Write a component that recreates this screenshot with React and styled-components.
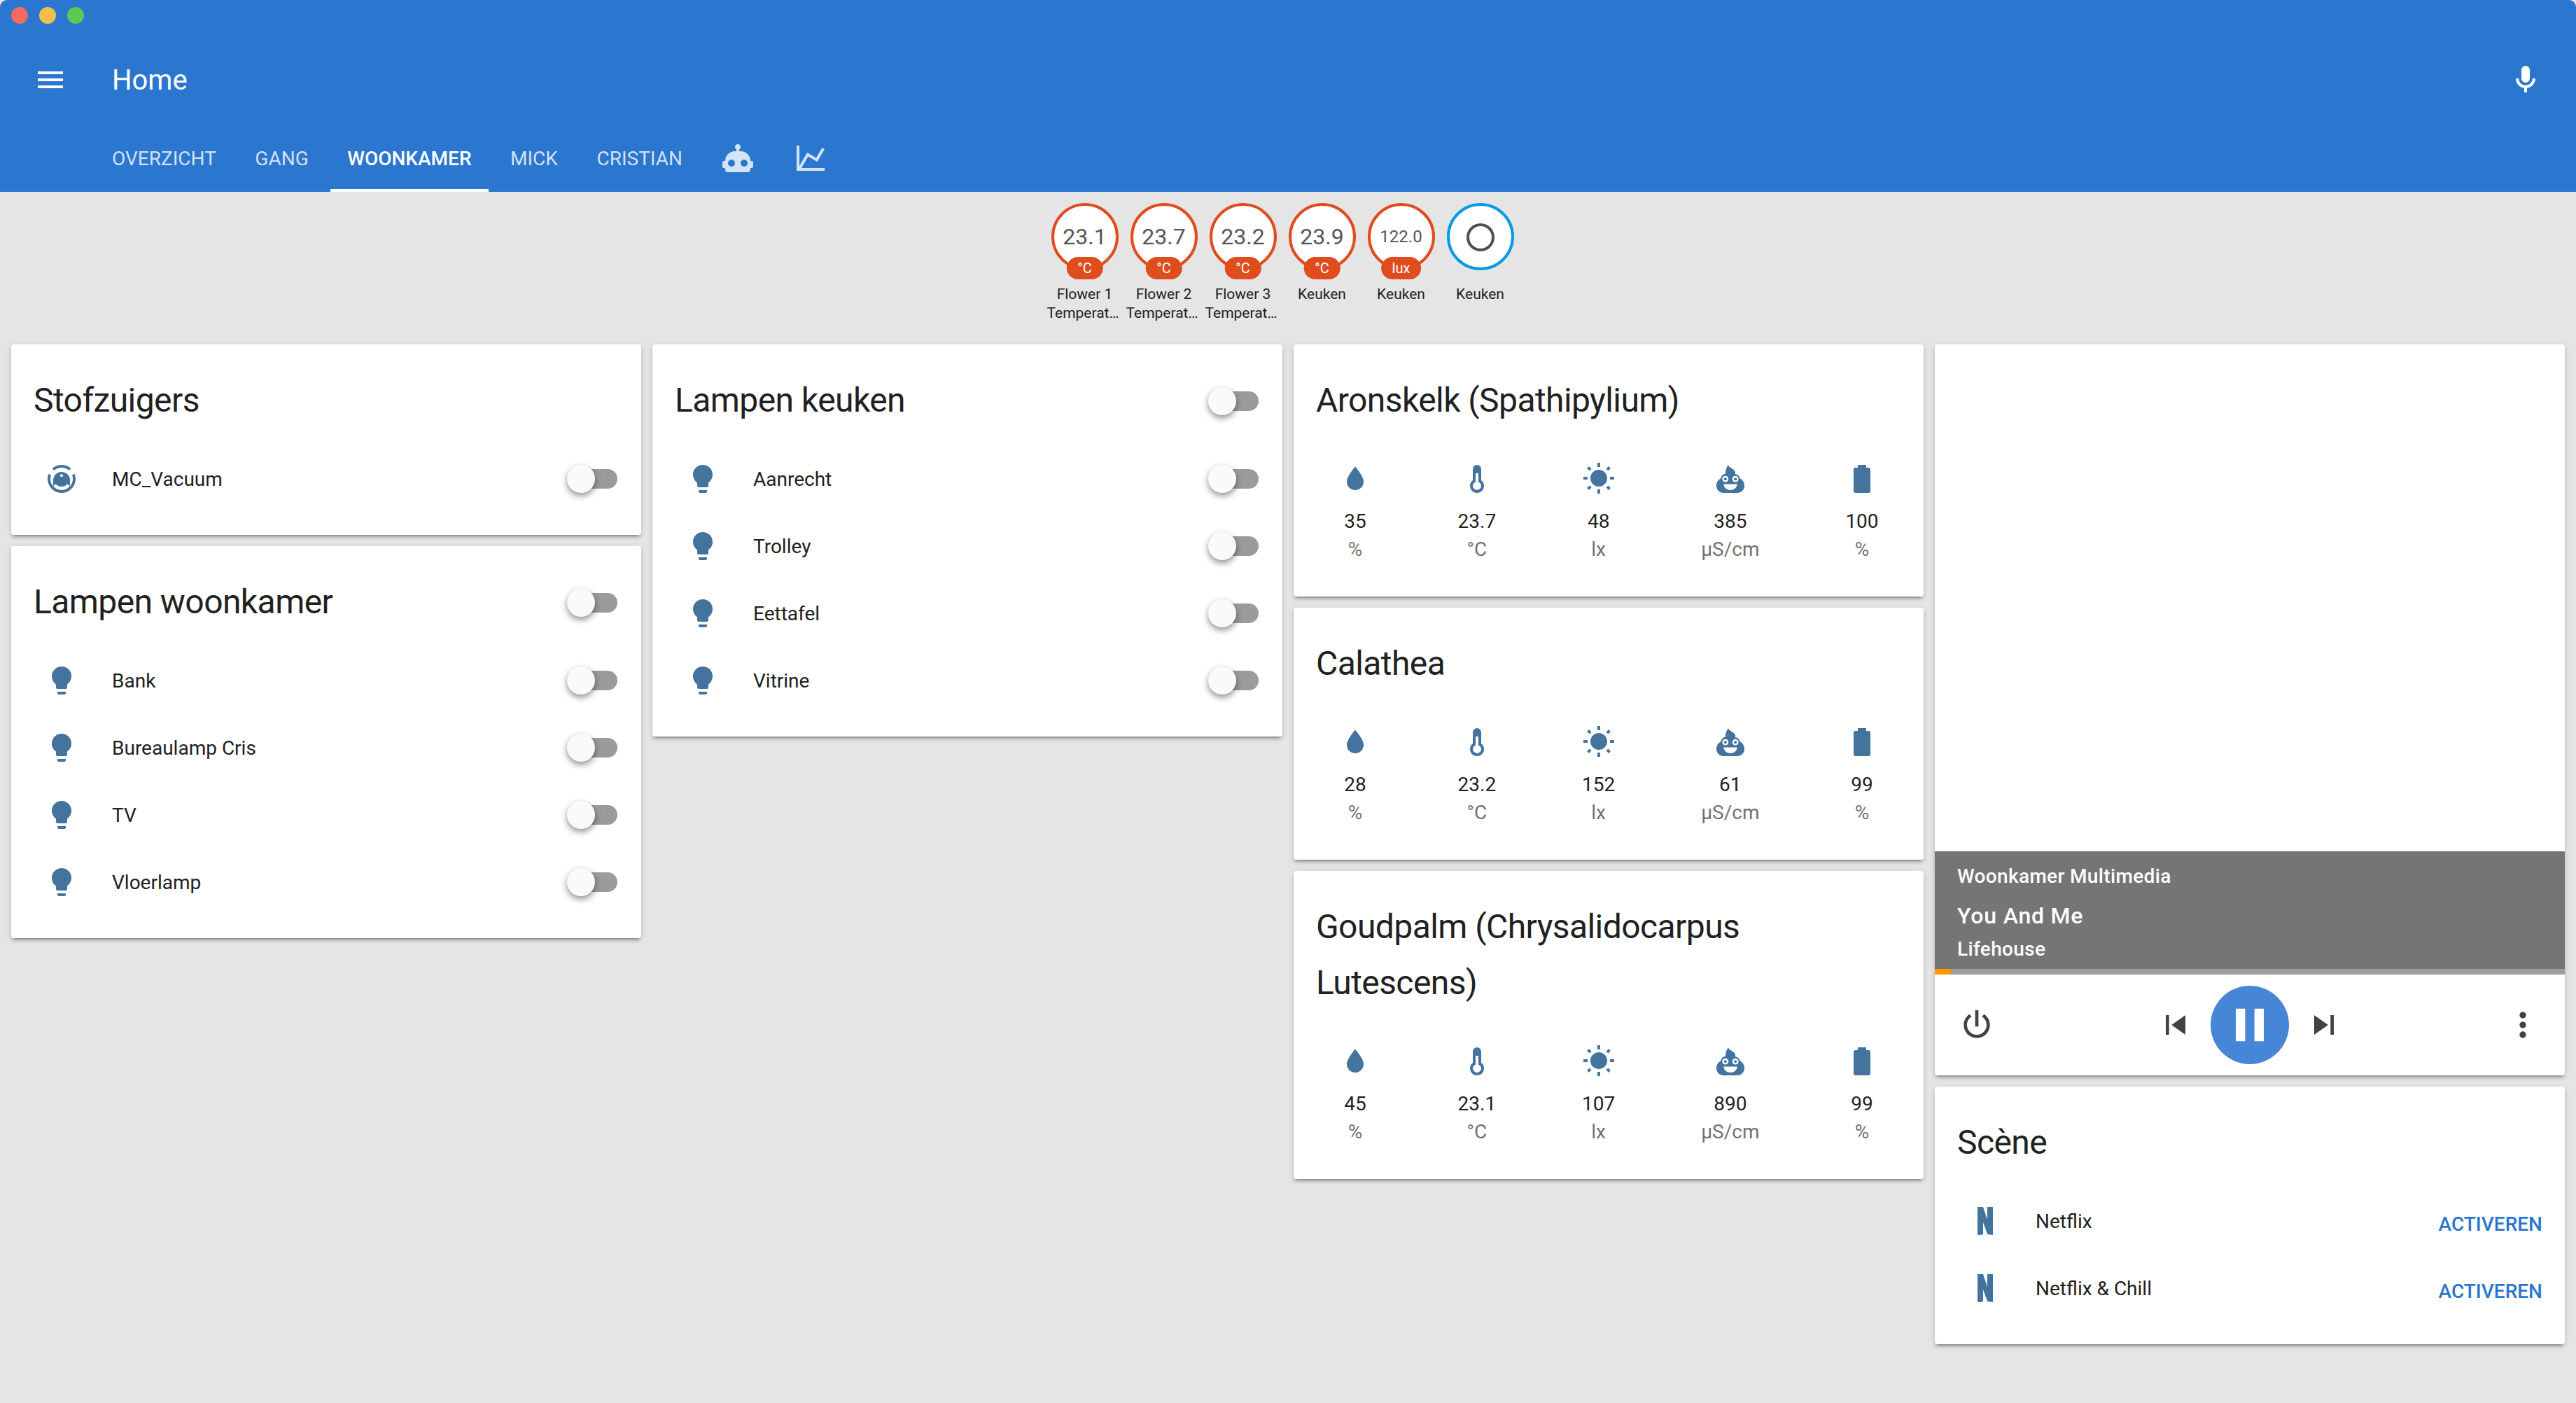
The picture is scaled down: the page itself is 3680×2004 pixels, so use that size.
import React from "react";
import styled, { createGlobalStyle } from "styled-components";

const P = {
  menu: "M3,6H21V8H3V6M3,11H21V13H3V11M3,16H21V18H3V16Z",
  mic: "M12,2A3,3 0 0,1 15,5V11A3,3 0 0,1 12,14A3,3 0 0,1 9,11V5A3,3 0 0,1 12,2M19,11C19,14.53 16.39,17.44 13,17.93V21H11V17.93C7.61,17.44 5,14.53 5,11H7A5,5 0 0,0 12,16A5,5 0 0,0 17,11H19Z",
  robot: "M12,2A2,2 0 0,1 14,4C14,4.74 13.6,5.39 13,5.73V7H14A7,7 0 0,1 21,14H22A1,1 0 0,1 23,15V18A1,1 0 0,1 22,19H21V20A2,2 0 0,1 19,22H5A2,2 0 0,1 3,20V19H2A1,1 0 0,1 1,18V15A1,1 0 0,1 2,14H3A7,7 0 0,1 10,7H11V5.73C10.4,5.39 10,4.74 10,4A2,2 0 0,1 12,2M7.5,13A2.5,2.5 0 0,0 5,15.5A2.5,2.5 0 0,0 7.5,18A2.5,2.5 0 0,0 10,15.5A2.5,2.5 0 0,0 7.5,13M16.5,13A2.5,2.5 0 0,0 14,15.5A2.5,2.5 0 0,0 16.5,18A2.5,2.5 0 0,0 19,15.5A2.5,2.5 0 0,0 16.5,13Z",
  chart: "M16,11.78L20.24,4.45L21.97,5.45L16.74,14.5L10.23,10.75L5.46,19H22V21H2V3H4V17.54L9.5,8L16,11.78Z",
  ring: "M12,2A10,10 0 0,0 2,12A10,10 0 0,0 12,22A10,10 0 0,0 22,12A10,10 0 0,0 12,2M12,4A8,8 0 0,1 20,12A8,8 0 0,1 12,20A8,8 0 0,1 4,12A8,8 0 0,1 12,4Z",
  bulb: "M12,2A7,7 0 0,0 5,9C5,11.38 6.19,13.47 8,14.74V17A1,1 0 0,0 9,18H15A1,1 0 0,0 16,17V14.74C17.81,13.47 19,11.38 19,9A7,7 0 0,0 12,2M9,21A1,1 0 0,0 10,22H14A1,1 0 0,0 15,21V20H9V21Z",
  water: "M12,20A6,6 0 0,1 6,14C6,10 12,3.25 12,3.25C12,3.25 18,10 18,14A6,6 0 0,1 12,20Z",
  thermo: "M15 13V5A3 3 0 0 0 9 5V13A5 5 0 1 0 15 13ZM11 8H13V14.2A3 3 0 1 1 11 14.2Z",
  sun: "M3.55,18.54L4.96,19.95L6.76,18.16L5.34,16.74M11,22.45C11.32,22.45 13,22.45 13,22.45V19.5H11M12,5.5A6,6 0 0,0 6,11.5A6,6 0 0,0 12,17.5A6,6 0 0,0 18,11.5C18,8.18 15.31,5.5 12,5.5M20,12.5H23V10.5H20M17.24,18.16L19.04,19.95L20.45,18.54L18.66,16.74M20.45,4.46L19.04,3.05L17.24,4.84L18.66,6.26M13,0.55H11V3.5H13M4,10.5H1V12.5H4M6.76,4.84L4.96,3.05L3.55,4.46L5.34,6.26L6.76,4.84Z",
  battery: "M16.67,4H15V2H9V4H7.33A1.33,1.33 0 0,0 6,5.33V20.67C6,21.4 6.6,22 7.33,22H16.67A1.33,1.33 0 0,0 18,20.67V5.33C18,4.6 17.4,4 16.67,4Z",
  netflix: "M6.5,2H10.5L13.44,10.83L13.5,2H17.5V22C16.25,21.78 15,21.64 13.63,21.5L10.5,13L10.5,21.59C9.18,21.71 7.83,21.86 6.5,22V2Z",
  power: "M16.56,5.44L15.11,6.89C16.84,7.94 18,9.83 18,12A6,6 0 0,1 12,18A6,6 0 0,1 6,12C6,9.83 7.16,7.94 8.88,6.88L7.44,5.44C5.36,6.88 4,9.28 4,12A8,8 0 0,0 12,20A8,8 0 0,0 20,12C20,9.28 18.64,6.88 16.56,5.44M13,3H11V13H13",
  prev: "M6,18V6H8V18H6M9.5,12L18,6V18L9.5,12Z",
  next: "M16,18H18V6H16M6,18L14.5,12L6,6V18Z",
  pause: "M14,19H18V5H14M6,19H10V5H6V19Z",
  dots: "M12,16A2,2 0 0,1 14,18A2,2 0 0,1 12,20A2,2 0 0,1 10,18A2,2 0 0,1 12,16M12,10A2,2 0 0,1 14,12A2,2 0 0,1 12,14A2,2 0 0,1 10,12A2,2 0 0,1 12,10M12,4A2,2 0 0,1 14,6A2,2 0 0,1 12,8A2,2 0 0,1 10,6A2,2 0 0,1 12,4Z",
};

const GlobalStyle = createGlobalStyle`
  html, body { margin: 0; padding: 0; background: #e5e5e5; }
  body { font-family: Roboto, "Liberation Sans", sans-serif; color: #212121; }
`;

const Page = styled.div`
  min-height: 2004px;
  background: #e5e5e5;
  display: flex;
  flex-direction: column;
`;

const Header = styled.header`
  background: #2b76ce;
  color: #fff;
  border-radius: 10px 10px 0 0;
`;

const TitleBar = styled.div`
  height: 50px;
  box-sizing: border-box;
  padding: 10px 0 0 16px;
  display: flex;
  gap: 16px;
`;

const Light = styled.span`
  width: 24px;
  height: 24px;
  border-radius: 50%;
  background: ${(p) => p.$color};
`;

const Toolbar = styled.div`
  height: 128px;
  box-sizing: border-box;
  padding: 0 48px;
  display: flex;
  align-items: center;
`;

const Title = styled.div`
  margin-left: 64px;
  padding-top: 2px;
  flex: 1;
  font-size: 40px;
  line-height: 48px;
`;

const Svg = styled.svg`
  display: block;
  flex: none;
  width: ${(p) => p.$size || 48}px;
  height: ${(p) => p.$size || 48}px;
  fill: ${(p) => p.$color || "currentColor"};
`;

const Icon = ({ d, size, color }) => (
  <Svg viewBox="0 0 24 24" $size={size} $color={color}>
    <path d={d} fillRule="evenodd" />
  </Svg>
);

const TabBar = styled.nav`
  height: 96px;
  padding-left: 136px;
  display: flex;
  gap: 7.5px;
`;

const Tab = styled.div`
  padding: 0 24px;
  display: flex;
  align-items: center;
  font-size: 28px;
  font-weight: ${(p) => (p.$active ? 500 : 400)};
  color: ${(p) => (p.$active ? "#fff" : "rgba(255,255,255,.8)")};
  box-shadow: ${(p) => (p.$active ? "inset 0 -4px 0 #fff" : "none")};
`;

const Badges = styled.div`
  display: flex;
  justify-content: center;
  padding: 16px 16px 31px 0;
`;

const Badge = styled.div`
  width: 113px;
  display: flex;
  flex-direction: column;
  align-items: center;
`;

const Circle = styled.div`
  position: relative;
  width: 96px;
  height: 96px;
  box-sizing: border-box;
  border-radius: 50%;
  border: 4.8px solid ${(p) => p.$color};
  background: #fff;
  display: flex;
  align-items: center;
  justify-content: center;
  color: #555;
  font-weight: 400;
  font-size: ${(p) => (p.$small ? 24 : 32)}px;
`;

const CircleGlyph = styled.span`
  display: block;
  margin-top: 2px;
`;

const Chip = styled.span`
  position: absolute;
  bottom: -17px;
  left: 50%;
  transform: translateX(-50%);
  height: 32px;
  line-height: 32px;
  padding: 0 16px;
  border-radius: 16px;
  background: #df4c1e;
  color: #fff;
  font-size: 20px;
  font-weight: 400;
  white-space: nowrap;
`;

const BadgeLabel = styled.div`
  margin-top: 21px;
  width: 108px;
  text-align: center;
  font-size: 21px;
  line-height: 27px;
  color: #222;
`;

const BadgeLine = styled.div`
  white-space: nowrap;
  overflow: hidden;
  text-overflow: ellipsis;
`;

const Grid = styled.main`
  display: grid;
  grid-template-columns: repeat(4, 900px);
  gap: 16px;
  padding: 0 16px;
`;

const Column = styled.div`
  display: flex;
  flex-direction: column;
  gap: 16px;
`;

const Card = styled.section`
  background: #fff;
  border-radius: 4px;
  box-shadow: 0 4px 4px rgba(0, 0, 0, .14), 0 2px 10px rgba(0, 0, 0, .12), 0 6px 2px -4px rgba(0, 0, 0, .2);
`;

const CardHead = styled.div`
  padding: 40px 34px 0 32px;
  display: flex;
  align-items: center;
  justify-content: space-between;
`;

const CardTitle = styled.h2`
  margin: 0;
  font-size: 48px;
  font-weight: 400;
  letter-spacing: -0.012em;
  line-height: 80px;
  color: #212121;
`;

const Rows = styled.div`
  padding: 24px 0 32px;
`;

const Row = styled.div`
  height: 96px;
  padding: 0 34px 0 48px;
  display: flex;
  align-items: center;
`;

const RowName = styled.div`
  flex: 1;
  margin-left: 48px;
  font-size: 28px;
  color: #212121;
`;

const Toggle = styled.div`
  position: relative;
  width: 72px;
  height: 40px;
  margin-top: ${(p) => (p.$head ? 2 : 0)}px;
`;

const Track = styled.span`
  position: absolute;
  top: 6px;
  left: 4px;
  right: 0;
  height: 28px;
  border-radius: 14px;
  background: #9b9b9b;
`;

const Thumb = styled.span`
  position: absolute;
  top: 0;
  left: 0;
  width: 40px;
  height: 40px;
  border-radius: 50%;
  background: #fafafa;
  box-shadow: 0 4px 10px rgba(0, 0, 0, .45);
`;

const Activate = styled.div`
  margin: 8px -2px 0 0;
  font-size: 28px;
  font-weight: 500;
  color: #2b76ce;
`;

const Attrs = styled.div`
  padding: 48px 64px 47px;
  display: flex;
  justify-content: space-between;
`;

const Attr = styled.div`
  display: flex;
  flex-direction: column;
  align-items: center;
`;

const AttrValue = styled.div`
  margin-top: 17px;
  font-size: 28px;
  line-height: 40px;
  color: #212121;
`;

const AttrUnit = styled.div`
  font-size: 28px;
  line-height: 40px;
  color: #727272;
`;

const MediaArt = styled.div`
  height: 724px;
`;

const MediaInfo = styled.div`
  height: 168px;
  box-sizing: border-box;
  padding: 16px 32px 8px;
  background: #757575;
  color: #fff;
  font-weight: 500;
`;

const MediaName = styled.div`
  font-size: 28px;
  line-height: 40px;
  letter-spacing: .0125em;
`;

const MediaTrack = styled.div`
  margin-top: 16px;
  font-size: 32px;
  line-height: 40px;
  letter-spacing: .025em;
`;

const MediaArtist = styled.div`
  margin-top: 8px;
  font-size: 28px;
  line-height: 40px;
  letter-spacing: .0125em;
`;

const Progress = styled.div`
  height: 8px;
  background: #9e9e9e;
`;

const ProgressFill = styled.div`
  height: 100%;
  background: #ff9800;
`;

const Controls = styled.div`
  height: 144px;
  box-sizing: border-box;
  padding: 0 32px;
  display: flex;
  align-items: center;
  justify-content: space-between;
  color: #424242;
`;

const Transport = styled.div`
  display: flex;
  align-items: center;
  gap: 22px;
`;

const PlayButton = styled.div`
  width: 112px;
  height: 112px;
  border-radius: 50%;
  background: #4786d6;
  color: #fff;
  display: flex;
  align-items: center;
  justify-content: center;
`;

const Poop = ({ color }) => (
  <Svg viewBox="0 0 24 24" $color={color}>
    <path d="M10.5 2C10.8 3.8 13.8 4.6 15 6.2C15.8 7.3 15.6 8 15.2 8.5C17.2 8.8 18.5 9.8 18.7 11.5C20.8 12.6 22 14.5 22 17C22 20 19.5 22 17 22H7C4.5 22 2 20 2 17C2 14.5 3.2 12.6 5.3 11.5C5.5 9.8 6.8 8.6 8.6 8.3C8.2 6 9.4 3.8 10.5 2Z" />
    <circle cx="8.4" cy="12.1" r="2.2" fill="#fff" />
    <circle cx="15.6" cy="12.1" r="2.2" fill="#fff" />
    <circle cx="8.4" cy="12.1" r="1" />
    <circle cx="15.6" cy="12.1" r="1" />
    <path d="M7.2 15.8H16.8C16.8 18.2 14.6 20 12 20C9.4 20 7.2 18.2 7.2 15.8Z" fill="#fff" />
  </Svg>
);

const Vacuum = ({ color }) => (
  <Svg viewBox="0 0 24 24" $color={color}>
    <path d="M6 5.3A9 9 0 0 1 18 5.3" fill="none" stroke={color} strokeWidth="2" />
    <path d="M3.54 8.9A9 9 0 1 0 20.46 8.9" fill="none" stroke={color} strokeWidth="2" />
    <path d="M6 13A6 6 0 0 1 18 13V17.2C17 15.8 16 15.6 15 16.6C13.5 17.8 10.5 17.8 9 16.6C8 15.6 7 15.8 6 17.2Z" />
    <circle cx="12" cy="9.6" r="1" fill="#fff" />
  </Svg>
);

const BLUE = "#44739e";
const RED = "#df4c1e";

const badges = [
  { value: "23.1", unit: "°C", lines: ["Flower 1", "Temperature"] },
  { value: "23.7", unit: "°C", lines: ["Flower 2", "Temperature"] },
  { value: "23.2", unit: "°C", lines: ["Flower 3", "Temperature"] },
  { value: "23.9", unit: "°C", lines: ["Keuken"] },
  { value: "122.0", unit: "lux", small: true, lines: ["Keuken"] },
];

const SwitchControl = ({ head }) => (
  <Toggle $head={head}>
    <Track />
    <Thumb />
  </Toggle>
);

const BulbRow = ({ name }) => (
  <Row>
    <Icon d={P.bulb} color={BLUE} />
    <RowName>{name}</RowName>
    <SwitchControl />
  </Row>
);

const LampCard = ({ title, names }) => (
  <Card>
    <CardHead>
      <CardTitle>{title}</CardTitle>
      <SwitchControl head />
    </CardHead>
    <Rows>
      {names.map((n) => (
        <BulbRow key={n} name={n} />
      ))}
    </Rows>
  </Card>
);

const PlantCard = ({ title, v }) => {
  const items = [
    { icon: <Icon d={P.water} color={BLUE} />, unit: "%" },
    { icon: <Icon d={P.thermo} color={BLUE} />, unit: "°C" },
    { icon: <Icon d={P.sun} color={BLUE} />, unit: "lx" },
    { icon: <Poop color={BLUE} />, unit: "µS/cm" },
    { icon: <Icon d={P.battery} color={BLUE} />, unit: "%" },
  ];
  return (
    <Card>
      <CardHead>
        <CardTitle>{title}</CardTitle>
      </CardHead>
      <Attrs>
        {items.map((it, i) => (
          <Attr key={i}>
            {it.icon}
            <AttrValue>{v[i]}</AttrValue>
            <AttrUnit>{it.unit}</AttrUnit>
          </Attr>
        ))}
      </Attrs>
    </Card>
  );
};

export default function App() {
  return (
    <Page>
      <GlobalStyle />
      <Header>
        <TitleBar>
          <Light $color="#f46a5f" />
          <Light $color="#f7bd4d" />
          <Light $color="#5fc853" />
        </TitleBar>
        <Toolbar>
          <Icon d={P.menu} />
          <Title>Home</Title>
          <Icon d={P.mic} />
        </Toolbar>
        <TabBar>
          <Tab>OVERZICHT</Tab>
          <Tab>GANG</Tab>
          <Tab $active>WOONKAMER</Tab>
          <Tab>MICK</Tab>
          <Tab>CRISTIAN</Tab>
          <Tab><Icon d={P.robot} /></Tab>
          <Tab><Icon d={P.chart} /></Tab>
        </TabBar>
      </Header>

      <Badges>
        {badges.map((b) => (
          <Badge key={b.value}>
            <Circle $color={RED} $small={b.small}>
              {b.value}
              <Chip>{b.unit}</Chip>
            </Circle>
            <BadgeLabel>
              {b.lines.map((l) => (
                <BadgeLine key={l}>{l}</BadgeLine>
              ))}
            </BadgeLabel>
          </Badge>
        ))}
        <Badge>
          <Circle $color="#039be5">
            <CircleGlyph><Icon d={P.ring} color="#505050" /></CircleGlyph>
          </Circle>
          <BadgeLabel><BadgeLine>Keuken</BadgeLine></BadgeLabel>
        </Badge>
      </Badges>

      <Grid>
        <Column>
          <Card>
            <CardHead>
              <CardTitle>Stofzuigers</CardTitle>
            </CardHead>
            <Rows>
              <Row>
                <Vacuum color={BLUE} />
                <RowName>MC_Vacuum</RowName>
                <SwitchControl />
              </Row>
            </Rows>
          </Card>
          <LampCard title="Lampen woonkamer" names={["Bank", "Bureaulamp Cris", "TV", "Vloerlamp"]} />
        </Column>
        <Column>
          <LampCard title="Lampen keuken" names={["Aanrecht", "Trolley", "Eettafel", "Vitrine"]} />
        </Column>
        <Column>
          <PlantCard title="Aronskelk (Spathipylium)" v={["35", "23.7", "48", "385", "100"]} />
          <PlantCard title="Calathea" v={["28", "23.2", "152", "61", "99"]} />
          <PlantCard title="Goudpalm (Chrysalidocarpus Lutescens)" v={["45", "23.1", "107", "890", "99"]} />
        </Column>
        <Column>
          <Card>
            <MediaArt />
            <MediaInfo>
              <MediaName>Woonkamer Multimedia</MediaName>
              <MediaTrack>You And Me</MediaTrack>
              <MediaArtist>Lifehouse</MediaArtist>
            </MediaInfo>
            <Progress>
              <ProgressFill style={{ width: "23px" }} />
            </Progress>
            <Controls>
              <Icon d={P.power} size={56} />
              <Transport>
                <Icon d={P.prev} size={56} />
                <PlayButton><Icon d={P.pause} size={80} /></PlayButton>
                <Icon d={P.next} size={56} />
              </Transport>
              <Icon d={P.dots} size={56} />
            </Controls>
          </Card>
          <Card>
            <CardHead>
              <CardTitle>Scène</CardTitle>
            </CardHead>
            <Rows>
              <Row>
                <Icon d={P.netflix} color={BLUE} />
                <RowName>Netflix</RowName>
                <Activate>ACTIVEREN</Activate>
              </Row>
              <Row>
                <Icon d={P.netflix} color={BLUE} />
                <RowName>Netflix &amp; Chill</RowName>
                <Activate>ACTIVEREN</Activate>
              </Row>
            </Rows>
          </Card>
        </Column>
      </Grid>
    </Page>
  );
}
